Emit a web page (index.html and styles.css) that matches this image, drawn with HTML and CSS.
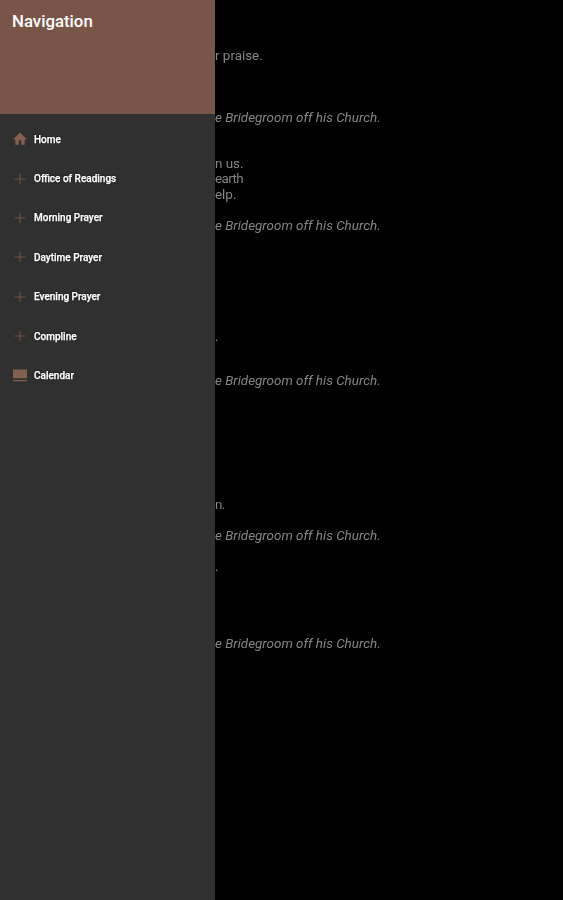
FILE: index.html
```html
<!DOCTYPE html>
<html lang="en">
<head>
    <meta charset="UTF-8">
    <meta name="viewport" content="width=device-width, initial-scale=1.0">
    <title>Navigation</title>
    <link rel="stylesheet" href="styles.css">
</head>
<body>
<div class="drawer">
    <div class="drawer-head">Navigation</div>
    <ul class="menu">
        <li class="item">
            <svg class="icon" viewBox="0 0 24 24"><path d="M10 22v-8h4v8h6v-9h4L12 1 0 13h4v9z"/></svg>
            <span>Home</span>
        </li>
        <li class="item">
            <svg class="icon plus" viewBox="0 0 24 24"><path d="M11 3h2v8h8v2h-8v8h-2v-8H3v-2h8z"/></svg>
            <span>Office of Readings</span>
        </li>
        <li class="item">
            <svg class="icon plus" viewBox="0 0 24 24"><path d="M11 3h2v8h8v2h-8v8h-2v-8H3v-2h8z"/></svg>
            <span>Morning Prayer</span>
        </li>
        <li class="item">
            <svg class="icon plus" viewBox="0 0 24 24"><path d="M11 3h2v8h8v2h-8v8h-2v-8H3v-2h8z"/></svg>
            <span>Daytime Prayer</span>
        </li>
        <li class="item">
            <svg class="icon plus" viewBox="0 0 24 24"><path d="M11 3h2v8h8v2h-8v8h-2v-8H3v-2h8z"/></svg>
            <span>Evening Prayer</span>
        </li>
        <li class="item">
            <svg class="icon plus" viewBox="0 0 24 24"><path d="M11 3h2v8h8v2h-8v8h-2v-8H3v-2h8z"/></svg>
            <span>Compline</span>
        </li>
        <li class="item">
            <svg class="icon" viewBox="0 0 24 24"><path d="M0 1h24v15H0zM0 19h24v2H0z"/></svg>
            <span>Calendar</span>
        </li>
    </ul>
</div>

<div class="reading">
    <p class="line">r praise.</p>
    <p class="line resp gap-4">e Bridegroom off his Church.</p>
    <p class="line gap-3">n us.</p>
    <p class="line tight">earth</p>
    <p class="line">elp.</p>
    <p class="line resp gap-2">e Bridegroom off his Church.</p>
    <p class="line gap-x">.</p>
    <p class="line resp gap-y">e Bridegroom off his Church.</p>
    <p class="line tight gap-z">n.</p>
    <p class="line resp gap-2">e Bridegroom off his Church.</p>
    <p class="line gap-2">.</p>
    <p class="line resp gap-w">e Bridegroom off his Church.</p>
</div>
</body>
</html>
```

FILE: styles.css
```css
* {
    padding: 0;
    margin: 0;
    box-sizing: border-box;
}
html, body {
    height: 100%;
}
body {
    display: flex;
    background: #000000;
    font-family: Roboto, "Liberation Sans", sans-serif;
    overflow: hidden;
}

.reading {
    flex: 1;
    padding-top: 47.5px;
    color: #858585;
    font-size: 13.4px;
    filter: blur(0.4px);
}
.line {
    line-height: 15.5px;
    white-space: nowrap;
}
.tight {
    letter-spacing: -0.6px;
}
.resp {
    font-style: italic;
}
.gap-2 { margin-top: 15.5px; }
.gap-3 { margin-top: 30.5px; }
.gap-4 { margin-top: 46.5px; }
.gap-x { margin-top: 95.5px; }
.gap-y { margin-top: 28.5px; }
.gap-z { margin-top: 108.5px; }
.gap-w { margin-top: 61.5px; }

.drawer {
    flex: none;
    width: 215px;
    background: #303030;
}
.drawer-head {
    height: 113.5px;
    padding: 12px 12px 0;
    background: #795548;
    color: #ffffff;
    font-size: 16.8px;
    font-weight: 500;
    line-height: 19px;
}
.menu {
    list-style: none;
    padding-top: 6px;
}
.item {
    display: flex;
    align-items: center;
    gap: 7px;
    height: 39.4px;
    padding-left: 13px;
    color: #ffffff;
    font-size: 10px;
    font-weight: 500;
}
.item span {
    -webkit-text-stroke: 0.25px #ffffff;
    text-shadow: 0 0 2px #000000;
    filter: blur(0.3px);
}
.icon {
    width: 14px;
    height: 14px;
    fill: #85604f;
}
.plus {
    fill: #6e5145;
}
```
